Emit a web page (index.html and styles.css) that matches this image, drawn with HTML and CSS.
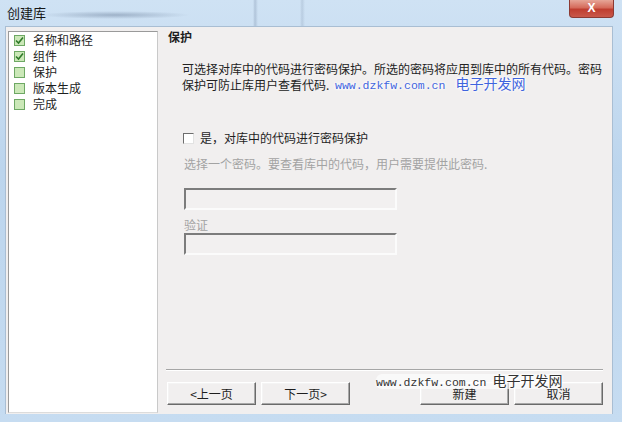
FILE: index.html
```html
<!DOCTYPE html>
<html lang="zh-CN">
<head>
  <meta charset="UTF-8">
  <meta name="viewport" content="width=device-width, initial-scale=1.0">
  <title>创建库</title>
  <link rel="stylesheet" href="styles.css">
</head>
<body>
<div class="window">
  <div class="titlebar">
    <span class="title">创建库</span>
    <span class="close">X</span>
  </div>
  <div class="client">
    <ul class="steps">
      <li><span class="tick done"><svg viewBox="0 0 9 9" width="9" height="9"><path d="M1 4.5 L3.5 7 L8 1.5" fill="none" stroke="#2f7a2a" stroke-width="1.6"/></svg></span>名称和路径</li>
      <li><span class="tick done"><svg viewBox="0 0 9 9" width="9" height="9"><path d="M1 4.5 L3.5 7 L8 1.5" fill="none" stroke="#2f7a2a" stroke-width="1.6"/></svg></span>组件</li>
      <li><span class="tick"></span>保护</li>
      <li><span class="tick"></span>版本生成</li>
      <li><span class="tick"></span>完成</li>
    </ul>
    <div class="page">
      <h2>保护</h2>
      <p class="desc">可选择对库中的代码进行密码保护。所选的密码将应用到库中的所有代码。密码<br>保护可防止库用户查看代码.</p>
      <label class="opt"><span class="box"></span>是，对库中的代码进行密码保护</label>
      <p class="hint">选择一个密码。要查看库中的代码，用户需要提供此密码.</p>
      <div class="field"></div>
      <div class="caption">验证</div>
      <div class="field"></div>
      <div class="spacer"></div>
      <div class="sep"></div>
      <div class="buttons">
        <button class="btn">&lt;上一页</button>
        <button class="btn">下一页&gt;</button>
        <span class="gap"></span>
        <button class="btn">新建</button>
        <button class="btn">取消</button>
      </div>
    </div>
  </div>
  <div class="mark mark-top"><span class="url">www.dzkfw.com.cn</span>电子开发网</div>
  <div class="mark mark-bottom"><span class="url">www.dzkfw.com.cn</span>电子开发网</div>
</div>
</body>
</html>
```

FILE: styles.css
```css
body {
  margin: 0;
  font-family: "Noto Sans CJK SC", "Liberation Sans", sans-serif;
  font-size: 12px;
  color: #1e1e1e;
}
.window {
  position: relative;
  width: 622px;
  height: 422px;
  box-sizing: border-box;
  padding: 0 9px 8px 5px;
  background: linear-gradient(180deg, #cfe2f4 0%, #bcd5ed 40%, #c6dcf1 100%);
  display: flex;
  flex-direction: column;
  overflow: hidden;
}
.titlebar {
  height: 27px;
  display: flex;
  justify-content: space-between;
  align-items: flex-start;
  margin: 0 -1px 0 -5px;
  padding-left: 5px;
  /* blurred desktop showing through the glass */
  background:
    radial-gradient(ellipse 75px 4px at 115px 15px, rgba(70, 90, 120, 0.35), transparent),
    linear-gradient(90deg, transparent 253px, rgba(90, 110, 140, 0.25) 255px, transparent 258px),
    linear-gradient(90deg, transparent 300px, rgba(90, 110, 140, 0.18) 302px, transparent 305px);
}
.title {
  margin: 5px 0 0 2px;
  font-size: 13px;
  line-height: 16px;
  color: #161616;
}
.close {
  width: 45px;
  height: 18px;
  border-radius: 0 0 4px 4px;
  background: linear-gradient(180deg, #e6a597 0%, #d56b5b 45%, #bf3e30 55%, #c9584a 100%);
  border: 1px solid #8c3a33;
  border-top: none;
  box-sizing: border-box;
  color: #fff;
  font-family: "Liberation Sans", sans-serif;
  font-weight: bold;
  font-size: 12px;
  line-height: 17px;
  text-align: center;
}
.client {
  flex: 1;
  display: flex;
  background: #f1efef;
  padding: 4px 0 1px 2px;
  border: 1px solid #a9bed3;
  border-bottom: none;
  margin-top: -1px;
}
.steps {
  list-style: none;
  margin: 0;
  padding: 0 0 0 5px;
  width: 150px;
  box-sizing: border-box;
  background: #fff;
  border: 1px solid #9a9a9a;
  border-right-color: #c9c9c9;
  border-bottom-color: #dcdcdc;
}
.steps li {
  display: flex;
  align-items: center;
  line-height: 16px;
}
.tick {
  width: 11px;
  height: 11px;
  box-sizing: border-box;
  margin-right: 8px;
  border: 1px solid #6ea864;
  background: #cbe8b8;
  display: flex;
  align-items: center;
  justify-content: center;
}
.page {
  flex: 1;
  display: flex;
  flex-direction: column;
  padding: 0 9px 8px 10px;
}
.page h2 {
  margin: -2px 0 0;
  font-size: 12px;
  line-height: 16px;
  font-weight: bold;
}
.desc {
  margin: 16px 0 0 14px;
  line-height: 16px;
  white-space: nowrap;
  color: #222;
}
.opt {
  display: flex;
  align-items: center;
  margin: 37px 0 0 15px;
  line-height: 16px;
}
.box {
  width: 11px;
  height: 11px;
  box-sizing: border-box;
  margin-right: 6px;
  background: #fff;
  border: 1px solid;
  border-color: #6d6d6d #e2e2e2 #e2e2e2 #6d6d6d;
}
.hint {
  margin: 10px 0 0 16px;
  line-height: 16px;
  color: #a3a3a3;
}
.field {
  width: 213px;
  height: 22px;
  box-sizing: border-box;
  margin-left: 16px;
  border: 2px solid;
  border-color: #7c7c7c #fbfbfb #fbfbfb #7c7c7c;
  background: #f2f0f0;
}
.field:first-of-type {
  margin-top: 16px;
}
.caption {
  margin: 7px 0 0 16px;
  line-height: 16px;
  color: #a3a3a3;
}
.spacer {
  flex: 1;
}
.sep {
  margin: 0 0 0 -2px;
  height: 1px;
  background: #a6a6a6;
  border-bottom: 1px solid #fff;
}
.buttons {
  display: flex;
  gap: 5px;
  margin: 11px 0 0 -1px;
}
.gap {
  flex: 1;
}
.btn {
  width: 89px;
  height: 23px;
  box-sizing: border-box;
  padding: 0;
  font-family: inherit;
  font-size: 12px;
  line-height: 13px;
  color: #1e1e1e;
  background: #f1efef;
  border: 1px solid;
  border-color: #ffffff #6a6a6a #6a6a6a #ffffff;
  box-shadow: inset -1px -1px 0 #a8a8a8, inset 1px 1px 0 #f4f4f4;
}
.mark {
  position: absolute;
  white-space: nowrap;
  font-size: 14px;
  line-height: 13px;
  text-shadow: 0 0 3px #fff, 0 0 3px #fff, 0 0 4px #fff;
}
.mark .url {
  font-family: "Liberation Mono", monospace;
  font-size: 11.5px;
}
.mark-top {
  left: 335px;
  top: 77px;
  color: #3f64de;
}
.mark-top .url {
  margin-right: 10px;
}
.mark-bottom {
  left: 376px;
  top: 374px;
  color: #333;
  background: rgba(255, 255, 255, 0.6);
  border-radius: 6px;
}
.mark-bottom .url {
  margin-right: 6px;
}
```
